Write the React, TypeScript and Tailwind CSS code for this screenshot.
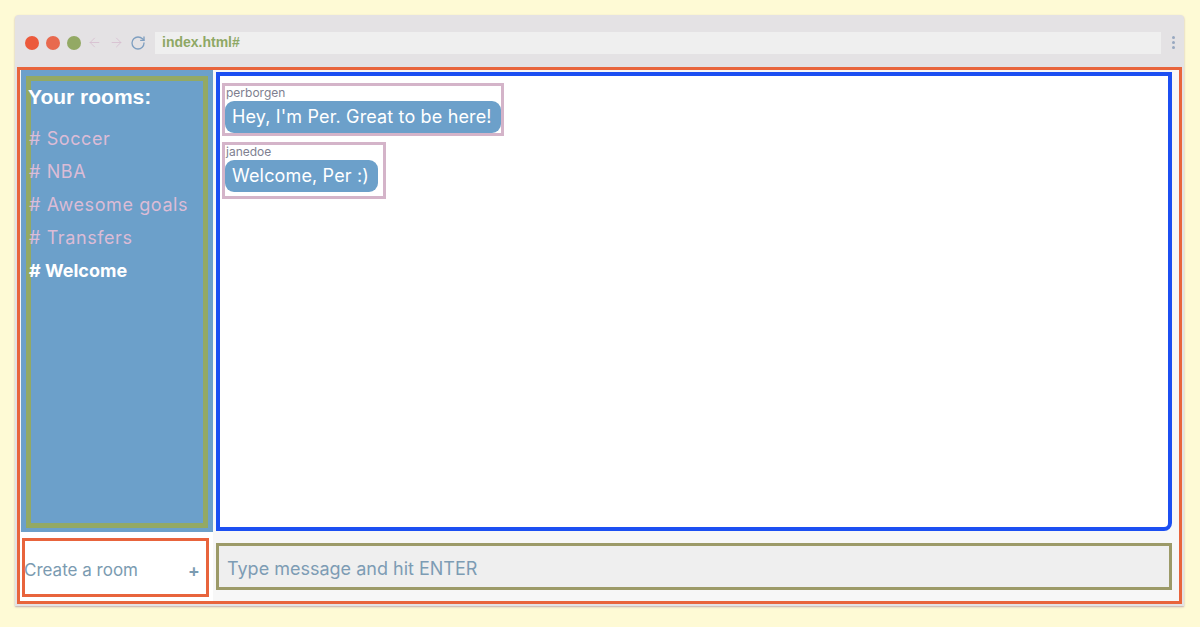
import { RotateCw, ArrowLeft, ArrowRight } from 'lucide-react';

const rooms = ['Soccer', 'NBA', 'Awesome goals', 'Transfers', 'Welcome'];

const messages = [
  { user: 'perborgen', text: "Hey, I'm Per. Great to be here!" },
  { user: 'janedoe', text: 'Welcome, Per :)' }
];

const App = () => {
  return (
    <div className="w-[1200px] h-[627px] bg-[#fefad5] pt-[15px] pl-[15px] overflow-hidden">
      <div className="w-[1169px] h-[591px] flex flex-col bg-[#e4e2e4] shadow-[0_1px_2px_rgba(150,120,150,0.6)] rounded-t-[4px]">
        {/* browser chrome */}
        <div className="h-[52px] flex items-center pl-[10px] pr-[8px] pt-[3px] shrink-0">
          <div className="flex items-center gap-[7px]">
            <span className="w-[14px] h-[14px] rounded-full bg-[#ec5a3c]" />
            <span className="w-[14px] h-[14px] rounded-full bg-[#e8694e]" />
            <span className="w-[14px] h-[14px] rounded-full bg-[#93a964]" />
          </div>
          <ArrowLeft size={15} strokeWidth={1.3} className="text-[#d6bccf] ml-[6px]" />
          <ArrowRight size={15} strokeWidth={1.3} className="text-[#d6bccf] ml-[7px]" />
          <RotateCw size={16} strokeWidth={2} className="text-[#7f9fc0] ml-[6px]" />
          <div className="ml-[9px] h-[22px] flex-1 bg-[#efefef] flex items-center px-[7px]">
            <span className="text-[14px] font-bold text-[#8ea865]" style={{ fontFamily: '"Liberation Sans", Arial, sans-serif' }}>
              index.html#
            </span>
          </div>
          <div className="flex flex-col gap-[2px] ml-[11px] mr-[1px]">
            <span className="w-[3px] h-[3px] rounded-full bg-[#98a8c0]" />
            <span className="w-[3px] h-[3px] rounded-full bg-[#98a8c0]" />
            <span className="w-[3px] h-[3px] rounded-full bg-[#98a8c0]" />
          </div>
        </div>

        {/* app */}
        <div className="flex-1 ml-[2px] mr-[2px] mb-[2px] border-[3px] border-[#e8643c] bg-[#f7f7f7] grid grid-cols-[193px_1fr] grid-rows-[462px_1fr]">
          {/* sidebar */}
          <div className="bg-[#6ca0ca] pl-[5px] pr-[5px] pt-[6px] pb-[4px] ml-[1px]">
            <div className="h-full border-[5px] border-[#93a964] pt-[3px]" style={{ fontFamily: 'Inter, "Noto Sans", sans-serif' }}>
              <h3 className="text-[21px] font-bold text-white -ml-[3px] leading-[26px]" style={{ fontFamily: '"Liberation Sans", Arial, sans-serif' }}>
                Your rooms:
              </h3>
              <ul className="mt-[12px] -ml-[2px]">
                {rooms.map(r => (
                  <li
                    key={r}
                    className={`h-[33px] flex items-center text-[18px] ${
                      r === 'Welcome' ? 'text-white font-bold tracking-[0px]' : 'text-[#dcbcd6] tracking-[0.6px]'
                    }`}
                  >
                    # {r}
                  </li>
                ))}
              </ul>
            </div>
          </div>

          {/* messages */}
          <div className="bg-[#f7f7f7] pl-[3px] pr-[7px] pt-[2px] pb-[1px]">
            <div className="h-full bg-white border-4 border-[#1c4ff2] rounded-br-[8px] pt-[7px] pl-[2px]" style={{ fontFamily: 'Inter, "Noto Sans", sans-serif' }}>
              {messages.map((m, i) => (
                <div
                  key={m.user}
                  className={`w-fit border-[3px] border-[#d4b4c9] mb-[6px] ${i === 0 ? 'pb-[0px] pr-[0px]' : 'pb-[4px] pr-[5px]'}`}
                >
                  <div className="text-[12px] leading-[14px] text-[#7e7f90] overflow-hidden pl-[1px]">{m.user}</div>
                  <div className="bg-[#6ca0ca] text-white text-[18px] tracking-[0.15px] leading-[22px] pl-[7px] pr-[9px] py-[5px] rounded-[9px] mt-[1px]">
                    {m.text}
                  </div>
                </div>
              ))}
            </div>
          </div>

          {/* create room */}
          <div className="bg-white pl-[2px] pr-[4px] pt-[6px] pb-[4px] flex">
            <div className="flex-1 border-[3px] border-[#e8643c] flex items-center justify-between pl-[0px] pr-[3px] pt-[7px]">
              <span className="text-[17px] text-[#7b9bb1] -ml-[1px]" style={{ fontFamily: 'Inter, "Noto Sans", sans-serif' }}>
                Create a room
              </span>
              <span className="text-[18px] text-[#7b9bb1] font-bold mr-[4px]">+</span>
            </div>
          </div>

          {/* send message */}
          <div className="bg-[#f7f7f7] pl-[3px] pr-[7px] pt-[11px] pb-[11px] flex">
            <div className="flex-1 border-[3px] border-[#9c9a68] bg-[#efefef] flex items-center pl-[8px] pt-[3px]">
              <span className="text-[18px] text-[#7d9cb4]" style={{ fontFamily: 'Inter, "Noto Sans", sans-serif' }}>
                Type message and hit ENTER
              </span>
            </div>
          </div>
        </div>
      </div>
    </div>
  );
};

export default App;
